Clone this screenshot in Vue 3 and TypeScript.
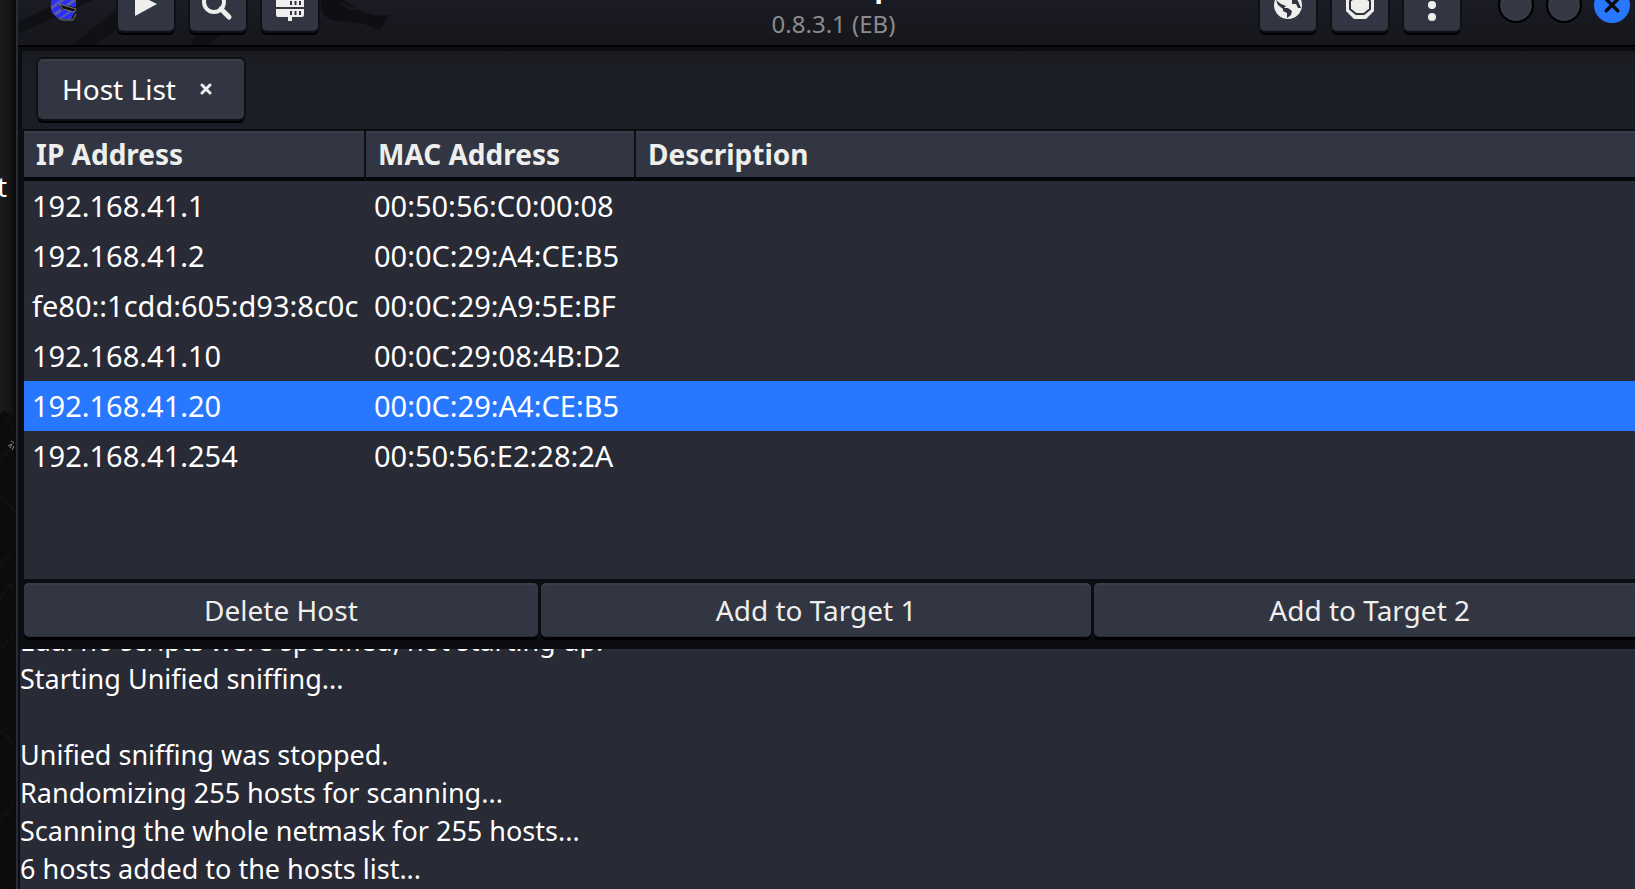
<script setup lang="ts">
interface Host {
  ip: string
  mac: string
}

const hosts: Host[] = [
  { ip: '192.168.41.1', mac: '00:50:56:C0:00:08' },
  { ip: '192.168.41.2', mac: '00:0C:29:A4:CE:B5' },
  { ip: 'fe80::1cdd:605:d93:8c0c', mac: '00:0C:29:A9:5E:BF' },
  { ip: '192.168.41.10', mac: '00:0C:29:08:4B:D2' },
  { ip: '192.168.41.20', mac: '00:0C:29:A4:CE:B5' },
  { ip: '192.168.41.254', mac: '00:50:56:E2:28:2A' },
]
const selected = 4

const log: string[] = [
  'Lua: no scripts were specified, not starting up!',
  'Starting Unified sniffing...',
  '',
  'Unified sniffing was stopped.',
  'Randomizing 255 hosts for scanning...',
  'Scanning the whole netmask for 255 hosts...',
  '6 hosts added to the hosts list...',
]
</script>

<template>
  <div class="desktop">
    <aside class="wallpaper">
      <span class="desk-label">t</span>
      <svg class="rocks" viewBox="0 0 14 489" aria-hidden="true">
        <path d="M0 14 4 10 14 18V489H0Z" fill="#0c0c0e" />
        <path d="M0 28 8 20 14 30M0 60 14 45M0 95 14 110M0 165 14 150M0 200 10 184 14 190M0 250 14 235M0 330 14 345M0 420 14 405" fill="none" stroke="#121214" stroke-width="2" />
        <path d="M8 46 12 44 10 48M11 41 14 43M12 50 14 46" fill="none" stroke="#8a8a8d" stroke-width="1" />
      </svg>
    </aside>
    <main class="window">
      <header class="titlebar">
        <svg class="dragon" viewBox="0 0 380 45" aria-hidden="true">
          <path d="M0 22 46 0H76L0 34ZM54 45 110 0H142L76 45ZM172 45 182 30H205L193 45Z" fill="#101115" />
          <path d="M303 0C301 14 308 20 322 21C342 22 350 25 362 30L372 14C358 18 348 14 336 7L326 0Z" fill="#0e0f13" />
          <path d="M323 3 333 9 339 8" fill="none" stroke="#1a1b21" stroke-width="2" />
        </svg>
        <div class="group">
          <svg class="logo" viewBox="0 0 28 22" aria-hidden="true">
            <defs>
              <clipPath id="logo-shape"><path d="M2 0C-1 9 2 15 7 18Q10 20 15 20H21L23 15 26 12 12 11 8 5 26 8V0Z" /></clipPath>
            </defs>
            <g clip-path="url(#logo-shape)">
              <path d="M0 0H28V22H0Z" fill="#5658a8" />
              <path d="M-4 8 14 -4M-2 16 24 -3M2 22 28 3M12 22 28 11" stroke="#2a2cff" stroke-width="4" />
            </g>
            <path d="M9 5 26 10 24 13 13 10Z" fill="#0c0c10" stroke="#777" stroke-width="1" />
            <path d="M8 19 12 21H23L26 15" fill="none" stroke="#77777a" stroke-width="1" />
          </svg>
          <button class="tool" type="button" aria-label="Start sniffing">
            <svg viewBox="0 0 32 32" aria-hidden="true"><path d="M5 2 27 13 5 25Z" fill="#eeeeec" /></svg>
          </button>
          <button class="tool" type="button" aria-label="Scan for hosts">
            <svg viewBox="0 0 32 32" aria-hidden="true"><circle cx="12" cy="11" r="10" fill="none" stroke="#eeeeec" stroke-width="4" /><path d="m19 18 8 8" stroke="#eeeeec" stroke-width="5" stroke-linecap="round" /></svg>
          </button>
          <button class="tool" type="button" aria-label="Hosts list">
            <svg viewBox="0 0 32 32" aria-hidden="true">
              <path d="M2 0H30V6H2ZM2 8H30V16H2ZM2 18H30V24Q30 26 28 26H18V30H14V26H4Q2 26 2 24Z" fill="#eeeeec" />
              <path d="M17 10V14M21.500 10V14M26 10V14M17 20V24M21.500 20V24M26 20V24" stroke="#31343f" stroke-width="2" />
            </svg>
          </button>
        </div>
        <div class="titles">
          <strong>Ettercap</strong>
          <span>0.8.3.1 (EB)</span>
        </div>
        <div class="group right">
          <button class="tool" type="button" aria-label="MITM menu">
            <svg viewBox="0 0 32 32" aria-hidden="true">
              <circle cx="16" cy="14" r="14" fill="#eeeeec" />
              <path d="M4 9 9 13 14 15 11 18 6 14ZM11 17 16 17 20 20 19 24 15 27 15 22 11 20ZM20 9 24 7 26 10 29 17 26 17 24 13 20 13Z" fill="#31343f" />
            </svg>
          </button>
          <button class="tool" type="button" aria-label="Stop MITM">
            <svg viewBox="0 0 32 32" aria-hidden="true">
              <path d="M10 0H22L30 8V20L22 28H10L2 20V8Z" fill="#eeeeec" />
              <path d="M12 5H20L26 10V18L20 23H12L6 18V10Z" fill="none" stroke="#31343f" stroke-width="2" />
            </svg>
          </button>
          <button class="tool" type="button" aria-label="Menu">
            <svg viewBox="0 0 32 32" aria-hidden="true"><g fill="#eeeeec"><circle cx="16" cy="2" r="4" /><circle cx="16" cy="14" r="4" /><circle cx="16" cy="26" r="4" /></g></svg>
          </button>
          <div class="controls">
            <button class="round" type="button" aria-label="Minimize"></button>
            <button class="round" type="button" aria-label="Maximize"></button>
            <button class="round close" type="button" aria-label="Close">
              <svg viewBox="0 0 14 14" aria-hidden="true"><path d="m2 2 10 10M12 2 2 12" stroke="#08090c" stroke-width="3" stroke-linecap="round" /></svg>
            </button>
          </div>
        </div>
      </header>

      <section class="notebook">
        <div class="tabs">
          <div class="tab">
            <span>Host List</span>
            <button class="tab-close" type="button" aria-label="Close tab">
              <svg viewBox="0 0 12 12" aria-hidden="true"><path d="m2 2 8 8M10 2 2 10" stroke="#eeeeec" stroke-width="3" stroke-linecap="round" /></svg>
            </button>
          </div>
        </div>
        <div class="list">
          <table>
            <colgroup><col class="c-ip" /><col class="c-mac" /><col /></colgroup>
            <thead>
              <tr><th scope="col">IP Address</th><th scope="col">MAC Address</th><th scope="col">Description</th></tr>
            </thead>
            <tbody>
              <tr v-for="(host, i) in hosts" :key="host.ip" :class="{ selected: i === selected }">
                <td>{{ host.ip }}</td><td>{{ host.mac }}</td><td></td>
              </tr>
            </tbody>
          </table>
        </div>
        <div class="actions">
          <button class="delete" type="button">Delete Host</button>
          <button type="button">Add to Target 1</button>
          <button type="button">Add to Target 2</button>
        </div>
      </section>

      <section class="log">
        <p v-for="(line, i) in log" :key="i">{{ line }}</p>
      </section>
    </main>
  </div>
</template>

<style>
body {
  margin: 0;
  background: #282a35;
}
</style>

<style scoped>
.desktop {
  display: flex;
  height: 100vh;
  overflow: hidden;
  font-family: "Noto Sans", "Open Sans", sans-serif;
  font-size: 28px;
  color: #fff;
}
.desktop * {
  box-sizing: border-box;
}
button {
  font: inherit;
  color: #eeeeec;
  padding: 0;
  border: 0;
}
.wallpaper {
  position: relative;
  flex: 0 0 16px;
  overflow: hidden;
  background: linear-gradient(90deg, #1b1c1e, #141517 9px, #0d0e10 14px, #08090b);
}
.desk-label {
  position: absolute;
  right: 9px;
  top: 168px;
  line-height: 36px;
}
.rocks {
  position: absolute;
  left: 0;
  top: 400px;
  width: 14px;
  height: 489px;
}
.window {
  flex: 1;
  min-width: 0;
  display: flex;
  flex-direction: column;
  border-left: 2px solid #2a2b38;
  background: #0c0d10;
}
.titlebar {
  position: relative;
  display: grid;
  grid-template-columns: 1fr auto 1fr;
  align-items: end;
  align-content: end;
  flex: 0 0 47px;
  overflow: hidden;
  background: linear-gradient(#1a1b24, #16171b);
  border-bottom: 2px solid #000;
}
.dragon {
  position: absolute;
  left: 0;
  top: 0;
  width: 380px;
  height: 45px;
}
.group {
  position: relative;
  display: flex;
  align-items: flex-end;
  gap: 16px;
  padding-bottom: 14px;
}
.group.right {
  justify-content: flex-end;
}
.logo {
  width: 28px;
  height: 22px;
  margin: 0 24px 10px 32px;
}
.tool {
  display: flex;
  align-items: flex-end;
  justify-content: center;
  width: 56px;
  height: 56px;
  padding-bottom: 8px;
  border-radius: 5px;
  background: #323642;
  box-shadow: inset 0 -1px #272a33, 0 0 0 2px #101116, 0 3px 0 1px #000;
}
.tool svg {
  width: 32px;
  height: 32px;
}
.titles {
  display: flex;
  flex-direction: column;
  align-items: center;
  gap: 5px;
  padding: 0 0 5px 14px;
}
.titles strong {
  line-height: 34px;
}
.titles span {
  font-size: 24px;
  line-height: 32px;
  color: #8b8b8d;
}
.controls {
  display: flex;
  gap: 12px;
  padding: 0 5px 8px 22px;
}
.round {
  display: grid;
  place-items: center;
  width: 36px;
  height: 36px;
  border: 2px solid #000;
  border-radius: 50%;
  background: #353944;
}
.close {
  border-color: #2777ff;
  background: #2777ff;
}
.close svg {
  width: 16px;
  height: 16px;
}
.notebook {
  display: flex;
  flex-direction: column;
  flex: 0 0 602px;
  padding: 4px 0 8px 4px;
}
.tabs {
  flex: 0 0 78px;
  padding: 8px 16px;
  background: linear-gradient(#1a1b1f, #1b1e26 24px);
}
.tab {
  display: inline-flex;
  align-items: center;
  height: 60px;
  padding: 0 32px 0 24px;
  gap: 24px;
  border-radius: 5px;
  background: #323642;
  box-shadow: inset 0 2px #3a3e4a, 0 0 0 2px #0e1014, 0 3px 0 1px #000;
}
.tab-close {
  display: grid;
  width: 12px;
  height: 12px;
  background: none;
}
.list {
  flex: 1;
  margin-left: 2px;
  border-top: 2px solid #0d0e12;
  background: #282a35;
}
table {
  width: 100%;
  table-layout: fixed;
  border-spacing: 0;
}
.c-ip {
  width: 342px;
}
.c-mac {
  width: 270px;
}
th {
  height: 50px;
  padding: 0 12px;
  text-align: left;
  line-height: 38px;
  color: #eeeeec;
  background: #323642;
  border-right: 2px solid #0d0e12;
  border-bottom: 4px solid #060709;
  box-shadow: inset 0 2px #3a3e4a;
}
th:last-child {
  border-right: 0;
}
td {
  height: 50px;
  padding: 0 8px;
  font-size: 29px;
  line-height: 38px;
  white-space: nowrap;
}
.selected {
  background: #2777ff;
}
.actions {
  display: flex;
  gap: 3px;
  margin-right: -10px;
  padding: 4px 0 4px 2px;
}
.actions button {
  flex: 15 1 0;
  height: 54px;
  border-radius: 5px;
  background: #323642;
  box-shadow: inset 0 2px #3a3e4a, inset 0 -1px #2a2c36, 0 3px 0 #000;
}
.actions .delete {
  flex-grow: 14;
}
.log {
  flex: 1;
  min-height: 0;
  display: flex;
  flex-direction: column;
  justify-content: flex-end;
  overflow: hidden;
  margin-left: 2px;
  padding-bottom: 1px;
  font-size: 27px;
  background: #282a35;
}
.log p {
  flex: 0 0 38px;
  margin: 0;
  line-height: 38px;
  white-space: nowrap;
}
</style>
